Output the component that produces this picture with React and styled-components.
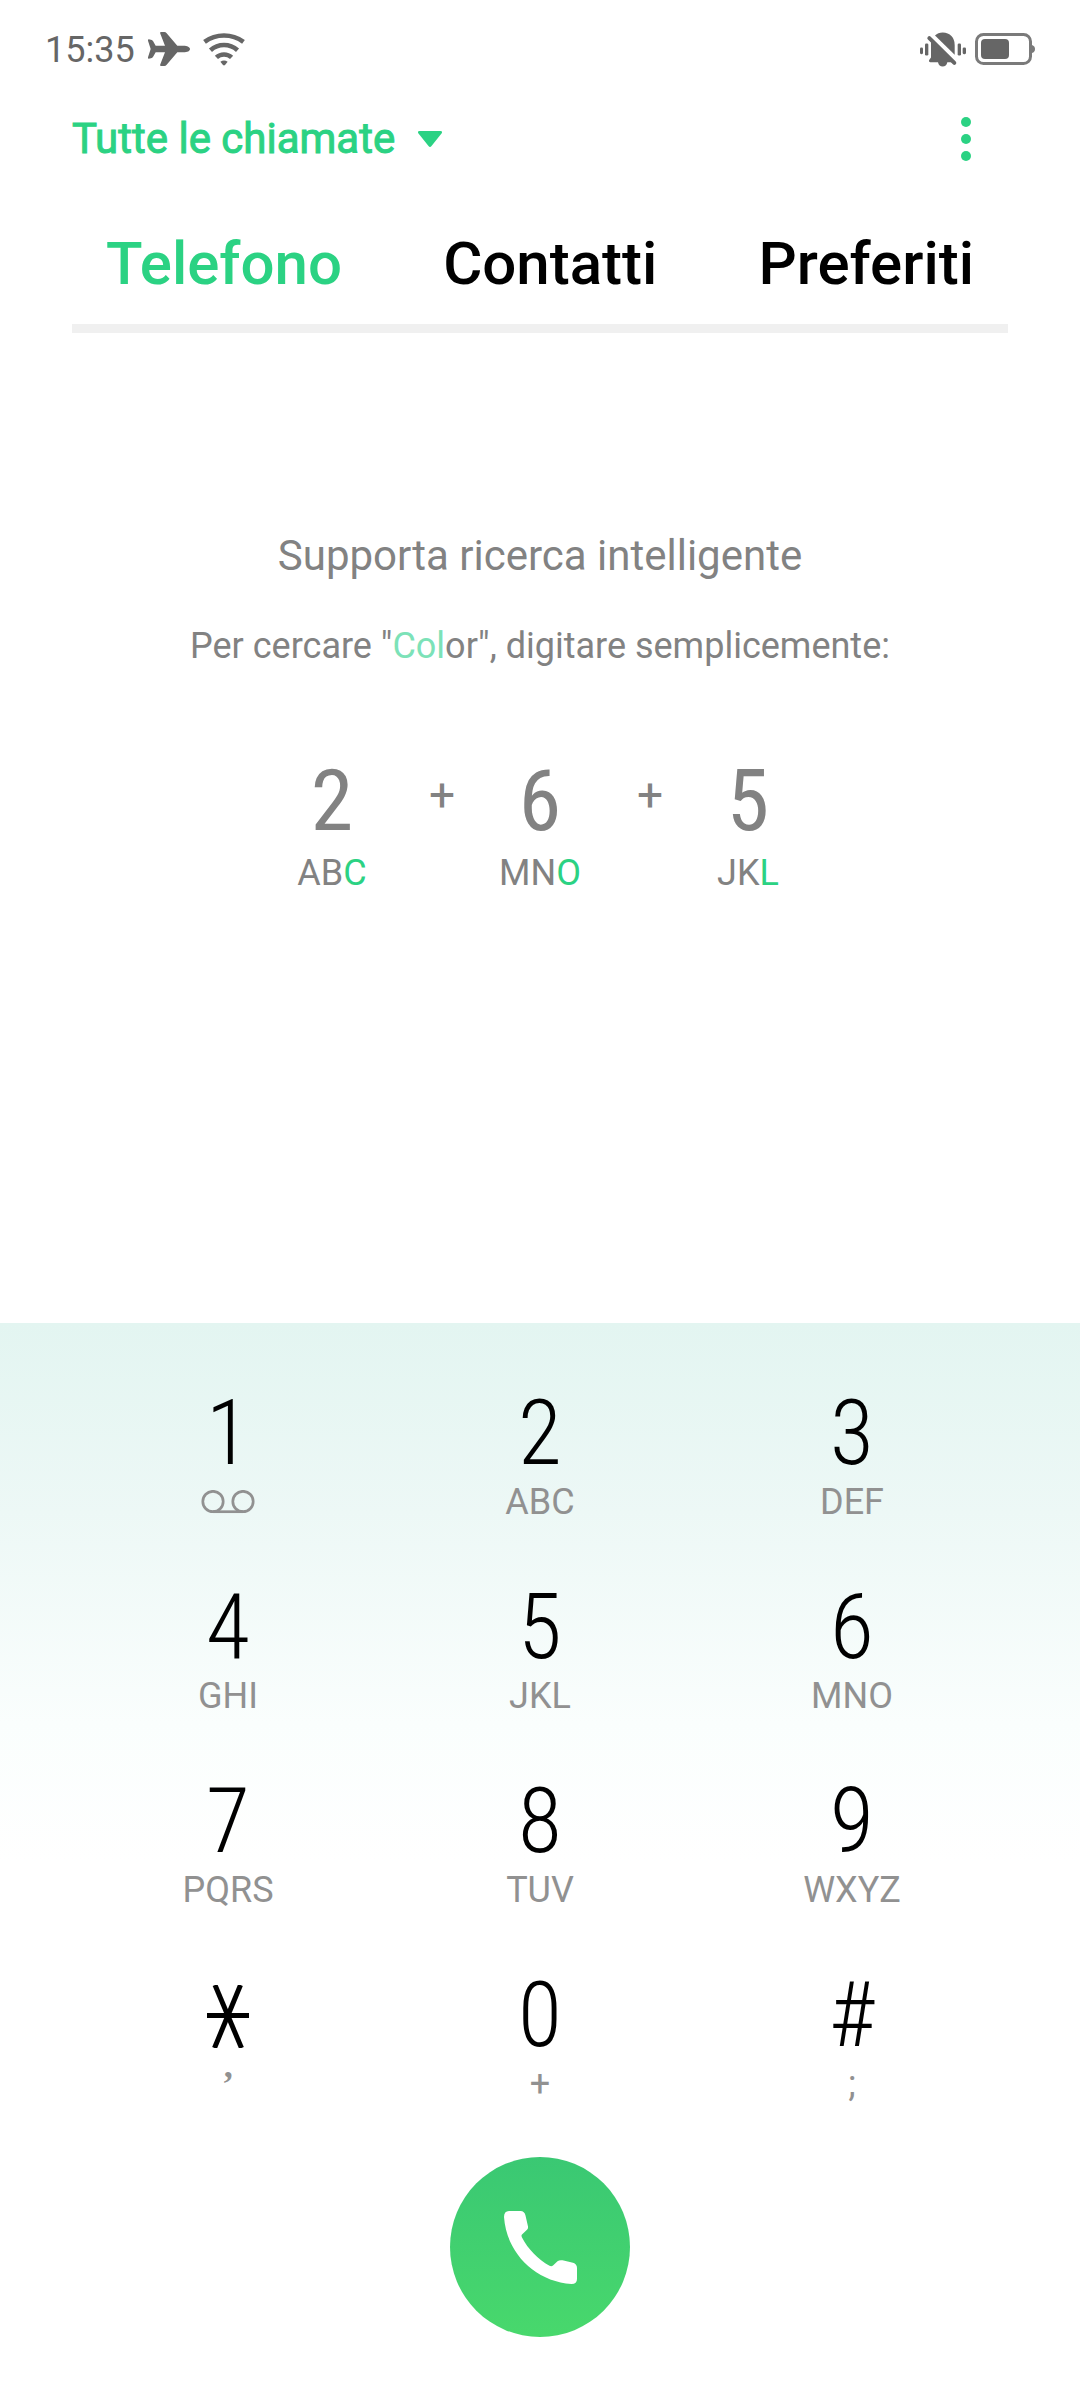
import styled, { createGlobalStyle } from 'styled-components';

import React, { Component } from 'react';

const GREEN = '#2bd283';
const GREY = '#828282';
const STATUS = '#666666';

const GlobalStyle = createGlobalStyle`
  * {
    box-sizing: border-box;
  }

  body {
    margin: 0;
    background: #ffffff;
    font-family: Roboto, 'Liberation Sans', sans-serif;
  }

  button,
  select {
    margin: 0;
    padding: 0;
    border: 0;
    background: none;
    color: inherit;
    font: inherit;
    cursor: pointer;
  }

  svg {
    display: block;
    flex: none;
  }
`;

const Screen = styled.div`
  display: flex;
  flex-direction: column;
  min-height: 100vh;
`;

const StatusBar = styled.header`
  display: flex;
  align-items: center;
  justify-content: space-between;
  height: 98px;
  padding: 0 45px;
  color: ${STATUS};
`;

const StatusGroup = styled.div`
  display: flex;
  align-items: center;
  gap: ${props => props.$gap}px;
`;

const Clock = styled.time`
  padding-top: 2px;
  font-size: 36px;
  line-height: 48px;
`;

const Toolbar = styled.div`
  display: flex;
  align-items: center;
  justify-content: space-between;
  height: 82px;
  padding: 0 101px 0 72px;
  color: ${GREEN};
`;

const Filter = styled.label`
  display: flex;
  align-items: center;
  gap: 22px;
`;

const FilterSelect = styled.select`
  appearance: none;
  font-size: 42px;
  line-height: 60px;
  -webkit-text-stroke: 1px ${GREEN};
`;

const MenuButton = styled.button`
  padding: 8px;
`;

const Tabs = styled.nav`
  display: flex;
  justify-content: space-between;
  margin: 0 72px;
  padding: 24px 34px 0;
  border-bottom: 9px solid #f0f0f0;
`;

const Tab = styled.button`
  color: ${props => (props.$active ? GREEN : '#000000')};
  font-size: 60px;
  font-weight: 500;
  line-height: 120px;
`;

const Hint = styled.main`
  display: flex;
  flex: 1;
  flex-direction: column;
  align-items: center;
  padding: 193px 72px 96px;
  color: ${GREY};
`;

const HintTitle = styled.h1`
  margin: 0;
  font-size: 42px;
  font-weight: 400;
  line-height: 60px;
`;

const HintText = styled.p`
  margin: 36px 0 0;
  font-size: 36px;
  line-height: 48px;

  span {
    color: #7ce2b8;
  }
`;

const Example = styled.div`
  display: flex;
  align-items: flex-start;
  margin-top: 88px;
`;

const ExampleKey = styled.div`
  width: 96px;
  text-align: center;
`;

const ExampleDigit = styled.div`
  font-family: 'Roboto Condensed', Roboto, sans-serif;
  font-size: 86px;
  line-height: 86px;
`;

const ExampleLetters = styled.div`
  margin-top: 5px;
  font-size: 36px;
  line-height: 48px;

  span {
    color: ${GREEN};
  }
`;

const Plus = styled.div`
  width: 112px;
  padding-left: 12px;
  font-size: 46px;
  line-height: 74px;
  text-align: center;
`;

const Dialer = styled.section`
  display: flex;
  flex-direction: column;
  align-items: center;
  gap: 52px;
  padding: 65px 72px 63px;
  background: linear-gradient(#e3f5f1, #edf8f6 190px, #fafefd 400px, #ffffff 540px);
`;

const Keypad = styled.div`
  display: grid;
  grid-template-columns: repeat(3, 1fr);
  row-gap: 59px;
  width: 100%;
`;

const Key = styled.button`
  display: flex;
  flex-direction: column;
  align-items: center;
  gap: 1px;
`;

const Digit = styled.span`
  display: flex;
  align-items: center;
  height: 92px;
  color: #000000;
  font-family: 'Roboto Condensed', Roboto, sans-serif;
  font-size: 90px;
  font-weight: 300;
  line-height: 92px;
`;

const Letters = styled.span`
  display: flex;
  align-items: center;
  height: 42px;
  color: #919191;
  font-size: 36px;
  line-height: 42px;
`;

const PauseMark = styled.span`
  font-family: 'Liberation Serif', serif;
  font-weight: 700;
`;

const CallButton = styled.button`
  display: flex;
  align-items: center;
  justify-content: center;
  width: 180px;
  height: 180px;
  border-radius: 50%;
  background: linear-gradient(#3ac873, #48d86c);
  color: #ffffff;
`;

const AirplaneIcon = () => (
  <svg width="42" height="34" viewBox="0 0 126 102" fill="currentColor">
    <path d="M88 41H106C118 41 126 45 126 51S118 61 106 61H88L56 98Q53 102 49 102H39Q35 102 37 97L51 61H23L15 75Q13 78 9 79L2 80Q-1 80 0 76L8 51L0 26Q-1 22 2 22L9 23Q13 24 15 27L23 41H51L37 5Q35 0 39 0H49Q53 0 56 4Z" />
  </svg>
);

const WifiIcon = () => (
  <svg width="42" height="33" viewBox="0 0 126 100" fill="none" stroke="currentColor" strokeWidth="14">
    <path d="M4 27A100 100 0 0 1 122 27" />
    <path d="M22 52A62 62 0 0 1 104 52" />
    <path d="M40 74A34 34 0 0 1 86 74" />
    <path d="M52 87Q63 80 74 87L66 97Q63 100 60 97Z" fill="currentColor" stroke="none" />
  </svg>
);

const MutedIcon = () => (
  <svg width="46" height="35" viewBox="0 0 138 104" fill="currentColor">
    <rect y="46" width="9" height="20" rx="4" />
    <rect x="15" y="34" width="10" height="36" rx="4" />
    <rect x="113" y="34" width="10" height="36" rx="4" />
    <rect x="128" y="46" width="10" height="20" rx="4" />
    <path d="M45 10Q54 1 68 1C90 1 104 17 104 38V68Z" />
    <path d="M33 24L99 90H82Q79 103 68 103T54 90H31Q26 90 27 84L33 76Z" />
    <path d="M28 18L103 92" stroke="currentColor" strokeWidth="12" strokeLinecap="round" />
  </svg>
);

const BatteryIcon = () => (
  <svg width="60" height="32" viewBox="0 0 60 32" fill="currentColor">
    <rect x="1.5" y="1.5" width="54" height="29" rx="7" fill="none" stroke="#7a7a7a" strokeWidth="3" />
    <path d="M57 12Q60 13 60 16T57 20Z" fill="#7a7a7a" />
    <rect x="6" y="6" width="28" height="20" rx="4" />
  </svg>
);

const CaretIcon = () => (
  <svg width="24" height="16" viewBox="0 0 24 16" fill="currentColor">
    <path d="M1.5 0H22.5Q25 0 23.5 2.5L13.5 15Q12 16.8 10.5 15L.5 2.5Q-1 0 1.5 0Z" />
  </svg>
);

const DotsIcon = () => (
  <svg width="10" height="44" viewBox="0 0 10 44" fill="currentColor">
    <circle cx="5" cy="5" r="5" />
    <circle cx="5" cy="22" r="5" />
    <circle cx="5" cy="39" r="5" />
  </svg>
);

const VoicemailIcon = () => (
  <svg width="54" height="24" viewBox="0 0 54 24" fill="none" stroke="currentColor" strokeWidth="2.7">
    <circle cx="12" cy="11.5" r="10.2" />
    <circle cx="42" cy="11.5" r="10.2" />
    <path d="M12 21.7H42" />
  </svg>
);

// star key symbol, three crossed strokes
const StarIcon = () => (
  <svg width="42" height="63" viewBox="0 0 42 63" stroke="currentColor" strokeWidth="5" role="img" aria-label="*">
    <line x1="0" y1="30.5" x2="42" y2="30.5" />
    <line x1="8" y1="0" x2="34.5" y2="63" />
    <line x1="33.5" y1="0" x2="7.5" y2="63" />
  </svg>
);

const PhoneIcon = () => (
  <svg width="73" height="73" viewBox="0 0 73 73" fill="currentColor">
    <path d="M0 6Q0 0 5 0H16.5Q20.5 0 21.5 4.5L24 15.5Q24.3 17.5 23 18.8L18 23.5Q17 24.5 18 26.5C24 38 34 48.5 45.5 54.8Q47.5 55.8 49 54.5L53.5 50.3Q55.5 48.7 58.5 49.3L69 51.8Q73 53 73 57V68Q73 73 67.5 73C31 70.5 2.5 42 0 6Z" />
  </svg>
);

const tabs = ['Telefono', 'Contatti', 'Preferiti'];

const keys = [
  { id: '1', digit: '1', letters: <VoicemailIcon /> },
  { id: '2', digit: '2', letters: 'ABC' },
  { id: '3', digit: '3', letters: 'DEF' },
  { id: '4', digit: '4', letters: 'GHI' },
  { id: '5', digit: '5', letters: 'JKL' },
  { id: '6', digit: '6', letters: 'MNO' },
  { id: '7', digit: '7', letters: 'PQRS' },
  { id: '8', digit: '8', letters: 'TUV' },
  { id: '9', digit: '9', letters: 'WXYZ' },
  { id: 'star', digit: <StarIcon />, letters: <PauseMark>’</PauseMark> },
  { id: '0', digit: '0', letters: '+' },
  { id: 'hash', digit: '#', letters: ';' },
];

class App extends Component {
  state = {
    activeTab: 'Telefono',
  };

  selectTab = activeTab => {
    this.setState({ activeTab });
  };

  render() {
    const { activeTab } = this.state;
    return (
      <Screen>
        <GlobalStyle />
        <StatusBar>
          <StatusGroup $gap={13}>
            <Clock>15:35</Clock>
            <AirplaneIcon />
            <WifiIcon />
          </StatusGroup>
          <StatusGroup $gap={9}>
            <MutedIcon />
            <BatteryIcon />
          </StatusGroup>
        </StatusBar>
        <Toolbar>
          <Filter>
            <FilterSelect aria-label="Tutte le chiamate">
              <option>Tutte le chiamate</option>
            </FilterSelect>
            <CaretIcon />
          </Filter>
          <MenuButton aria-label="Menu">
            <DotsIcon />
          </MenuButton>
        </Toolbar>
        <Tabs>
          {tabs.map(tab => (
            <Tab
              key={tab}
              $active={tab === activeTab}
              onClick={() => this.selectTab(tab)}
            >
              {tab}
            </Tab>
          ))}
        </Tabs>
        <Hint>
          <HintTitle>Supporta ricerca intelligente</HintTitle>
          <HintText>
            Per cercare "<span>Col</span>or", digitare semplicemente:
          </HintText>
          <Example>
            <ExampleKey>
              <ExampleDigit>2</ExampleDigit>
              <ExampleLetters>
                AB<span>C</span>
              </ExampleLetters>
            </ExampleKey>
            <Plus>+</Plus>
            <ExampleKey>
              <ExampleDigit>6</ExampleDigit>
              <ExampleLetters>
                MN<span>O</span>
              </ExampleLetters>
            </ExampleKey>
            <Plus>+</Plus>
            <ExampleKey>
              <ExampleDigit>5</ExampleDigit>
              <ExampleLetters>
                JK<span>L</span>
              </ExampleLetters>
            </ExampleKey>
          </Example>
        </Hint>
        <Dialer>
          <Keypad>
            {keys.map(({ id, digit, letters }) => (
              <Key key={id}>
                <Digit>{digit}</Digit>
                <Letters>{letters}</Letters>
              </Key>
            ))}
          </Keypad>
          <CallButton aria-label="Chiama">
            <PhoneIcon />
          </CallButton>
        </Dialer>
      </Screen>
    );
  }
}

export default App;
